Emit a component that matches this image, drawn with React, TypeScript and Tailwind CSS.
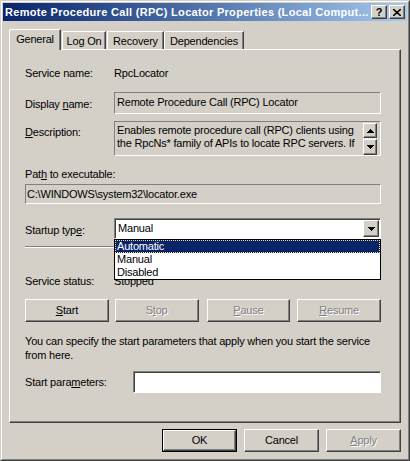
import React from "react";

const raised =
  "border border-t-white border-l-white border-r-[#404040] border-b-[#404040] shadow-[inset_-1px_-1px_0_#808080]";
const sunken2 =
  "border border-t-[#808080] border-l-[#808080] border-r-white border-b-white shadow-[inset_1px_1px_0_#404040]";
const flat =
  "border border-t-[#808080] border-l-[#808080] border-r-white border-b-white";
const dim = "text-[#808080] [text-shadow:1px_1px_0_#ffffff]";

const Arrow = ({ up = false }: { up?: boolean }) => (
  <svg width="7" height="4" viewBox="0 0 7 4" className={up ? "rotate-180" : ""}>
    <path d="M0 0h7v1H0zM1 1h5v1H1zM2 2h3v1H2zM3 3h1v1H3z" fill="#000" />
  </svg>
);

const Button = ({
  children,
  disabled = false,
  className = "",
}: {
  children: React.ReactNode;
  disabled?: boolean;
  className?: string;
}) => (
  <div
    className={`${raised} bg-[#d4d0c8] flex items-center justify-center ${
      disabled ? dim : "text-black"
    } ${className}`}
  >
    {children}
  </div>
);

const App = () => {
  const tabs = ["Log On", "Recovery", "Dependencies"];

  return (
    <div className="w-[410px] h-[461px] bg-[#d4d0c8] border border-t-[#d4d0c8] border-l-[#d4d0c8] border-r-[#404040] border-b-[#404040] font-['Liberation_Sans',sans-serif] text-[11px] leading-[13px] tracking-[-0.2px] text-black select-none">
      <div className="h-full border border-t-white border-l-white border-r-[#808080] border-b-[#808080] p-px flex flex-col">
        {/* title bar */}
        <div className="h-[18px] flex items-center bg-gradient-to-r from-[#0a246a] to-[#a6caf0] pl-[2px] pr-[2px]">
          <div className="flex-1 text-white font-bold text-[11px] tracking-[0.3px] whitespace-nowrap overflow-hidden">
            Remote Procedure Call (RPC) Locator Properties (Local Comput...
          </div>
          <div className={`${raised} w-[16px] h-[14px] bg-[#d4d0c8] flex items-center justify-center font-bold text-[11px]`}>
            ?
          </div>
          <div className={`${raised} w-[16px] h-[14px] bg-[#d4d0c8] flex items-center justify-center ml-[2px]`}>
            <svg width="8" height="7" viewBox="0 0 8 7">
              <path d="M0 0l8 7M8 0L0 7" stroke="#000" strokeWidth="1.6" />
            </svg>
          </div>
        </div>

        {/* tabs */}
        <div className="flex items-end mt-[8px] ml-[6px] h-[20px]">
          <div className="relative z-10 h-[21px] -mb-px w-[52px] bg-[#d4d0c8] border-l border-t border-white border-r border-r-[#404040] rounded-tl-[2px] shadow-[inset_-1px_0_0_#808080] flex justify-center pt-[3px]">
            General
          </div>
          {tabs.map((t, i) => (
            <div
              key={t}
              className={`h-[18px] bg-[#d4d0c8] border-l border-t border-white border-r border-r-[#404040] rounded-tl-[2px] shadow-[inset_-1px_0_0_#808080] flex justify-center pt-[3px] ${
                i === 0 ? "w-[44px] ml-px" : i === 1 ? "w-[57px] ml-px" : "w-[80px]"
              }`}
            >
              {t}
            </div>
          ))}
        </div>

        {/* panel */}
        <div className="mx-[6px] h-[374px] border-t border-l border-white border-r border-b border-r-[#404040] border-b-[#404040] shadow-[inset_-1px_-1px_0_#808080] pl-[15px] pr-[19px] flex flex-col">
          <div className="flex h-[16px] mt-[15px] items-center">
            <div className="w-[89px]">Service name:</div>
            <div>RpcLocator</div>
          </div>

          <div className="flex mt-[11px]">
            <div className="w-[89px] pt-[6px]">
              Display <u>n</u>ame:
            </div>
            <div className={`${flat} flex-1 h-[22px] px-[2px] pt-[3px]`}>
              Remote Procedure Call (RPC) Locator
            </div>
          </div>

          <div className="flex mt-[7px]">
            <div className="w-[89px] pt-[5px]">
              <u>D</u>escription:
            </div>
            <div className={`${flat} flex-1 h-[35px] flex pl-[2px] pr-[3px] pt-[1px]`}>
              <div className="flex-1 pt-[1px]">
                Enables remote procedure call (RPC) clients using the RpcNs* family of APIs to locate RPC servers. If
              </div>
              <div className="w-[14px] flex flex-col ml-[2px]">
                <Button className="h-[15px]">
                  <Arrow up />
                </Button>
                <div className="h-px bg-[repeating-linear-gradient(90deg,#ffffff_0_1px,#d4d0c8_1px_2px)]" />
                <Button className="h-[16px]">
                  <Arrow />
                </Button>
              </div>
            </div>
          </div>

          <div className="mt-[12px]">
            Pat<u>h</u> to executable:
          </div>
          <div className={`${flat} h-[20px] mt-[3px] px-px pt-[3px]`}>
            C:\WINDOWS\system32\locator.exe
          </div>

          <div className="flex mt-[14px]">
            <div className="w-[89px] pt-[6px]">
              Startup typ<u>e</u>:
            </div>
            <div className="relative flex-1">
              <div className={`${sunken2} bg-white h-[21px] flex items-center pl-[3px] pr-px`}>
                <div className="flex-1">Manual</div>
                <Button className="w-[16px] h-[17px]">
                  <Arrow />
                </Button>
              </div>
              <div className="absolute left-0 right-0 top-full z-20 bg-white border border-black">
                <div className="h-[13px] bg-[#0a246a] text-white border border-dotted border-[#f5db95] leading-[11px] pl-px">
                  Automatic
                </div>
                <div className="h-[13px] pl-[2px]">Manual</div>
                <div className="h-[13px] pl-[2px]">Disabled</div>
              </div>
            </div>
          </div>

          <div className="mt-[7px] h-[2px] border-t border-t-[#808080] border-b border-b-white" />

          <div className="flex mt-[27px] h-[13px]">
            <div className="w-[89px]">Service status:</div>
            <div>Stopped</div>
          </div>

          <div className="flex gap-[6px] mt-[11px]">
            <Button className="flex-1 h-[23px]">
              <span>
                <u>S</u>tart
              </span>
            </Button>
            <Button disabled className="flex-1 h-[23px]">
              <span>
                S<u>t</u>op
              </span>
            </Button>
            <Button disabled className="flex-1 h-[23px] ml-[2px]">
              <span>
                <u>P</u>ause
              </span>
            </Button>
            <Button disabled className="flex-1 h-[23px] ml-px">
              <span>
                <u>R</u>esume
              </span>
            </Button>
          </div>

          <div className="mt-[12px] leading-[14px]">
            You can specify the start parameters that apply when you start the service from here.
          </div>

          <div className="flex mt-[9px]">
            <div className="w-[108px] pt-[5px]">
              Start para<u>m</u>eters:
            </div>
            <div className={`${sunken2} bg-white flex-1 h-[22px]`} />
          </div>
        </div>

        {/* bottom buttons */}
        <div className="flex justify-end gap-[7px] mt-[6px] mr-[6px]">
          <div className="border border-black">
            <Button className="w-[73px] h-[21px]">OK</Button>
          </div>
          <Button className="w-[75px] h-[23px]">Cancel</Button>
          <Button disabled className="w-[75px] h-[23px]">
            <span>
              <u>A</u>pply
            </span>
          </Button>
        </div>
      </div>
    </div>
  );
};

export default App;
